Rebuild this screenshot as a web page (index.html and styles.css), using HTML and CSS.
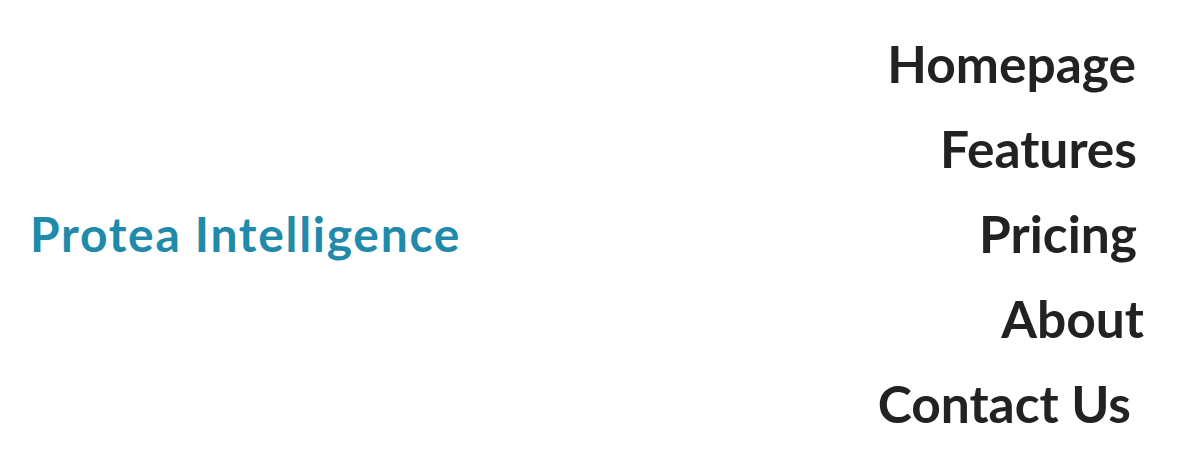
FILE: index.html
```html
<!DOCTYPE html>
<html lang="en">
<head>
<meta charset="utf-8">
<title>Protea Intelligence</title>
<link rel="stylesheet" href="styles.css">
</head>
<body>
<header class="header">
  <a class="logo" href="#">Protea Intelligence</a>
  <nav class="nav">
    <ul class="nav-list">
      <li class="nav-item item-home"><a href="#">Homepage</a></li>
      <li class="nav-item item-features"><a href="#">Features</a></li>
      <li class="nav-item item-pricing"><a href="#">Pricing</a></li>
      <li class="nav-item item-about"><a href="#">About</a></li>
      <li class="nav-item item-contact"><a href="#">Contact Us</a></li>
    </ul>
  </nav>
</header>
</body>
</html>
```
FILE: styles.css
```css
html, body {
  margin: 0;
  padding: 0;
  background: #ffffff;
}
body {
  font-family: "Lato", "Liberation Sans", sans-serif;
  width: 1200px;
  height: 460px;
  overflow: hidden;
}
.header {
  display: flex;
  justify-content: space-between;
  align-items: center;
  height: 460px;
  padding: 6px 56px 0 30px;
  box-sizing: border-box;
}
.logo {
  font-size: 48px;
  font-weight: 700;
  letter-spacing: 1.7px;
  color: #1f8aa9;
  text-decoration: none;
}
.nav-list {
  list-style: none;
  margin: 0;
  padding: 0;
  display: flex;
  flex-direction: column;
  align-items: flex-end;
}
.nav-item {
  font-size: 51.5px;
  font-weight: 700;
  line-height: 85px;
}
.nav-item a {
  color: #222222;
  text-decoration: none;
}
.item-home { margin-right: 8px; }
.item-features { margin-right: 7px; }
.item-pricing { margin-right: 7px; }
.item-about { margin-right: 0; }
.item-contact { margin-right: 13px; }
```
